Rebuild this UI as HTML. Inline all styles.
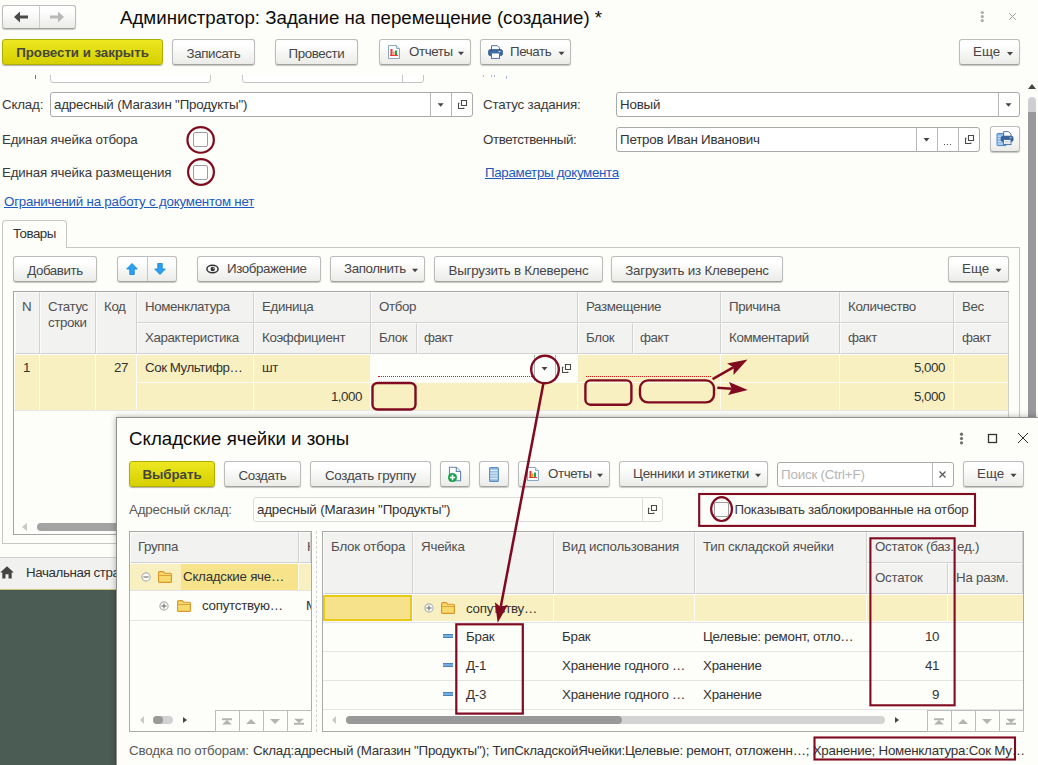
<!DOCTYPE html>
<html><head><meta charset="utf-8"><title>1C</title>
<style>
*{box-sizing:border-box;margin:0;padding:0}
html,body{width:1038px;height:765px;overflow:hidden;background:#fdfdf9}
body{font-family:"Liberation Sans",sans-serif;font-size:13.33px;letter-spacing:-0.18px;color:#3d3d3d;position:relative}
.a{position:absolute;white-space:nowrap}
.t{position:absolute;white-space:nowrap;line-height:16px;height:16px;color:#3a3a3a}
.btn{position:absolute;height:26px;border:1px solid #bcbcbc;border-bottom-color:#a2a2a2;border-radius:3px;background:linear-gradient(#ffffff 20%,#ebebe8);box-shadow:0 1px 1px rgba(0,0,0,.22);text-align:center;line-height:24px;white-space:nowrap;color:#464646;padding-top:2px;letter-spacing:-0.4px}
.ybtn{position:absolute;height:26px;border:1px solid #b3ac00;border-radius:3px;background:linear-gradient(#ece721,#d6d000);box-shadow:0 1px 1px rgba(0,0,0,.3);text-align:center;line-height:24px;font-weight:bold;color:#46463c;white-space:nowrap;letter-spacing:-0.06px;padding-top:1px}
.inp{position:absolute;height:25px;border:1px solid #a9a9a9;border-radius:3px;background:#fff;line-height:23px;padding-left:3px;white-space:nowrap;color:#333}
.sep{position:absolute;top:0;bottom:0;width:1px;background:#b8b8b8}
.caret{position:absolute;width:0;height:0;border-left:3.5px solid transparent;border-right:3.5px solid transparent;border-top:4px solid #444}
.link{position:absolute;color:#1c58bd;text-decoration:underline;white-space:nowrap;line-height:16px}
.chk{position:absolute;width:15px;height:15px;border:1px solid #9e9e9e;border-radius:2px;background:#fefefd}
.hl{position:absolute;height:1px;background:#e4e4e4}
.sel{position:absolute;background:#f9f0c1}
.hc{position:absolute;background:#f2f2f0;border-right:1px solid #d1d1d1;border-bottom:1px solid #d1d1d1;border-left:1px solid #fbfbfa;border-top:1px solid #fbfbfa;color:#505050;line-height:16px;padding-top:6px;white-space:nowrap;overflow:hidden;letter-spacing:-0.38px}
.dc{position:absolute;line-height:16px;white-space:nowrap;color:#333;letter-spacing:-0.45px}
.dd{letter-spacing:-0.25px}
svg{position:absolute;overflow:visible}
</style></head><body>
<!-- main window -->
<div class="btn" style="left:2px;top:5px;width:74px;height:24px"></div>
<div class="a" style="left:39px;top:6px;width:1px;height:22px;background:#cdcdcd"></div>
<svg style="left:14px;top:11px" width="14" height="12"><path d="M0 6L6 0.5V4.4H14V7.6H6V11.5Z" fill="#4a4a4a"/></svg>
<svg style="left:50px;top:11px" width="14" height="12"><path d="M14 6L8 0.5V4.6H0V7.4H8V11.5Z" fill="#b9b9b9"/></svg>
<div class="a" style="left:120px;top:6px;font-size:18.7px;line-height:24px;height:24px;color:#0c0c0c;letter-spacing:0">Администратор: Задание на перемещение (создание) *</div>
<svg style="left:980px;top:10px" width="5" height="13"><circle cx="2.3" cy="2.5" r="1.6" fill="#adadad"/><circle cx="2.3" cy="6.6" r="1.6" fill="#adadad"/><circle cx="2.3" cy="10.6" r="1.6" fill="#adadad"/></svg>
<svg style="left:1008px;top:12px" width="9" height="9"><path d="M1.1 1.1L7.9 7.9M7.9 1.1L1.1 7.9" stroke="#9c9c9c" stroke-width="1" fill="none"/></svg>
<div class="ybtn" style="left:2px;top:39px;width:161px;">Провести и закрыть</div>
<div class="btn" style="left:172px;top:39px;width:83px;">Записать</div>
<div class="btn" style="left:275px;top:39px;width:83px;">Провести</div>
<div class="btn" style="left:379px;top:39px;width:92px;"><span style="position:absolute;left:29px;top:0">Отчеты</span></div>
<svg style="left:388px;top:45px" width="13" height="14" viewBox="0 0 13 14"><path d="M0.5 0.5H8.5L11.5 3.5V13.5H0.5Z" fill="#fff" stroke="#8aa6c4" stroke-width="1"/><path d="M8.5 0.5V3.5H11.5" fill="#e6eef6" stroke="#8aa6c4" stroke-width="1"/><rect x="2.5" y="4" width="2" height="6" fill="#e8392c"/><rect x="5" y="6.5" width="1.5" height="3.5" fill="#f0a030"/><rect x="7" y="5.5" width="2" height="4.5" fill="#1fa04a"/><rect x="2" y="10" width="8" height="1" fill="#e8392c"/></svg>
<svg style="left:0;top:0" width="1" height="1"><path d="M458.0 51.75h6l-3.0 3.5z" fill="#444"/></svg>
<div class="btn" style="left:480px;top:39px;width:91px;"><span style="position:absolute;left:29px;top:0">Печать</span></div>
<svg style="left:488px;top:45px" width="15" height="14" viewBox="0 0 15 14"><path d="M3.5 5V0.7H9.3L11.5 2.9V5" fill="#fff" stroke="#4a74a8" stroke-width="1"/><rect x="0.6" y="4.6" width="13.8" height="6" rx="1.6" fill="#3c6aa3" stroke="#2d5688" stroke-width="0.8"/><rect x="3.5" y="8" width="8" height="5.4" fill="#fff" stroke="#4a74a8" stroke-width="1"/><rect x="10.5" y="6" width="2" height="1" fill="#cfe0f3"/></svg>
<svg style="left:0;top:0" width="1" height="1"><path d="M558.5 51.75h6l-3.0 3.5z" fill="#444"/></svg>
<div class="btn" style="left:959px;top:39px;width:61px;letter-spacing:0"><span style="position:absolute;left:13px;top:0">Еще</span></div>
<svg style="left:0;top:0" width="1" height="1"><path d="M1007.0 51.95h6l-3.0 3.5z" fill="#444"/></svg>
<div class="a" style="left:0;top:75px;width:1038px;height:10px;overflow:hidden">
<div class="a" style="left:50px;top:-17px;width:161px;height:25px;border:1px solid #c4c4c4;border-radius:3px;background:#fff"></div>
<div class="a" style="left:242px;top:-17px;width:182px;height:25px;border:1px solid #c4c4c4;border-radius:3px;background:#fff"></div>
<div class="a" style="left:402px;top:-2px;width:1px;height:9px;background:#c6c6c6"></div>
<div class="a" style="left:35px;top:0px;width:1px;height:4px;background:#777"></div>
<div class="a" style="left:483px;top:0px;width:1px;height:2px;background:#a9b9d9"></div>
<div class="a" style="left:491px;top:0px;width:1px;height:2px;background:#a9b9d9"></div>
<div class="a" style="left:494px;top:0px;width:1px;height:2px;background:#a9b9d9"></div>
<div class="a" style="left:506px;top:1px;width:1px;height:3px;background:#a9b9d9"></div>
</div>
<div class="t" style="left:2px;top:97px;">Склад:</div>
<div class="inp" style="left:50px;top:92px;width:423px;">адресный (Магазин "Продукты")<div class="sep" style="left:379px"></div><div class="sep" style="left:400px"></div></div>
<svg style="left:0;top:0" width="1" height="1"><path d="M437.7 103.25h6l-3.0 3.5z" fill="#444"/></svg>
<svg style="left:458px;top:100px" width="9" height="9" viewBox="0 0 9 9"><path d="M3.5 0.5h5v5h-5z" stroke="#4a4a4a" fill="none" stroke-width="1.1"/><path d="M1.5 3.2h-1v5.3h5.3v-1" stroke="#4a4a4a" fill="none" stroke-width="1.1"/></svg>
<div class="t" style="left:483px;top:97px;">Статус задания:</div>
<div class="inp" style="left:616px;top:92px;width:404px;">Новый<div class="sep" style="left:381px"></div></div>
<svg style="left:0;top:0" width="1" height="1"><path d="M1005.5 103.25h6l-3.0 3.5z" fill="#444"/></svg>
<div class="t" style="left:2px;top:132px;">Единая ячейка отбора</div>
<div class="chk" style="left:193px;top:132px;"></div>
<div class="t" style="left:483px;top:132px;letter-spacing:-0.4px">Ответственный:</div>
<div class="inp" style="left:616px;top:127px;width:364px;">Петров Иван Иванович<div class="sep" style="left:299px"></div><div class="sep" style="left:320px"></div><div class="sep" style="left:341px"></div></div>
<svg style="left:0;top:0" width="1" height="1"><path d="M923.5 137.95h6l-3.0 3.5z" fill="#444"/></svg>
<div class="a" style="left:944px;top:144px;width:1px;height:1px;background:#555"></div>
<div class="a" style="left:947px;top:144px;width:1px;height:1px;background:#555"></div>
<div class="a" style="left:950px;top:144px;width:1px;height:1px;background:#555"></div>
<svg style="left:965px;top:135px" width="9" height="9" viewBox="0 0 9 9"><path d="M3.5 0.5h5v5h-5z" stroke="#4a4a4a" fill="none" stroke-width="1.1"/><path d="M1.5 3.2h-1v5.3h5.3v-1" stroke="#4a4a4a" fill="none" stroke-width="1.1"/></svg>
<div class="btn" style="left:990px;top:126px;width:30px;"></div>
<svg style="left:996px;top:131px" width="18" height="16" viewBox="0 0 18 16"><rect x="1" y="2.4" width="9.4" height="12.2" rx="1" fill="#86b4e6" stroke="#4d86c6" stroke-width="1"/><path d="M1.6 5.2H10M1.6 7.9H10M1.6 10.6H10M1.6 13H10" stroke="#dbe9f7" stroke-width="0.9"/><path d="M7.7 5.6V0.6H12.6L15 3V5.6" fill="#fff" stroke="#41699c" stroke-width="0.9"/><rect x="5.2" y="5.2" width="11.8" height="5.2" rx="1.5" fill="#34629c" stroke="#274f82" stroke-width="0.8"/><rect x="7.4" y="8.6" width="7.6" height="5" fill="#fff" stroke="#41699c" stroke-width="0.9"/><path d="M8.6 10.4H13.8M8.6 12H13.8" stroke="#9db4d0" stroke-width="0.6"/><rect x="13.6" y="6.4" width="2" height="0.9" fill="#d6e4f5"/></svg>
<div class="t" style="left:2px;top:165px;">Единая ячейка размещения</div>
<div class="chk" style="left:193px;top:165px;"></div>
<div class="link" style="left:485px;top:165px;letter-spacing:-0.31px">Параметры документа</div>
<div class="link" style="left:4px;top:194px;letter-spacing:-0.22px">Ограничений на работу с документом нет</div>
<div class="a" style="left:2px;top:247px;width:1018px;height:297px;border:1px solid #c6c6c6;background:#fdfdf9"></div>
<div class="a" style="left:2px;top:220px;width:65px;height:28px;border:1px solid #c6c6c6;border-bottom:none;border-radius:4px 4px 0 0;background:#fdfdf9"></div>
<div class="t" style="left:13px;top:226px;color:#333;letter-spacing:-0.5px">Товары</div>
<div class="btn" style="left:13px;top:256px;width:84px;">Добавить</div>
<div class="btn" style="left:117px;top:256px;width:60px;"></div>
<div class="a" style="left:147px;top:257px;width:1px;height:24px;background:#c6c6c6"></div>
<svg style="left:126px;top:263px" width="12" height="12" viewBox="0 0 12 12"><path d="M6 0.5L11.3 6H8.2V11.5H3.8V6H0.7Z" fill="#2ba1f5" stroke="#1c86d8" stroke-width="0.9" stroke-linejoin="round"/></svg>
<svg style="left:154px;top:263px" width="12" height="12" viewBox="0 0 12 12"><path transform="rotate(180 6 6)" d="M6 0.5L11.3 6H8.2V11.5H3.8V6H0.7Z" fill="#2ba1f5" stroke="#1c86d8" stroke-width="0.9" stroke-linejoin="round"/></svg>
<div class="btn" style="left:197px;top:256px;width:124px;"><span style="position:absolute;left:29px;top:0">Изображение</span></div>
<svg style="left:206px;top:264px" width="13" height="10" viewBox="0 0 13 10"><ellipse cx="6.5" cy="5" rx="5.6" ry="3.7" fill="#fff" stroke="#333" stroke-width="1.5"/><circle cx="6.7" cy="5" r="2.2" fill="#333"/><circle cx="7.4" cy="4.3" r="0.7" fill="#bbb"/></svg>
<div class="btn" style="left:330px;top:256px;width:95px;"><span style="position:absolute;left:13px;top:0">Заполнить</span></div>
<svg style="left:0;top:0" width="1" height="1"><path d="M412.0 268.75h6l-3.0 3.5z" fill="#444"/></svg>
<div class="btn" style="left:434px;top:256px;width:169px;letter-spacing:-0.22px">Выгрузить в Клеверенс</div>
<div class="btn" style="left:611px;top:256px;width:172px;letter-spacing:-0.2px">Загрузить из Клеверенс</div>
<div class="btn" style="left:948px;top:256px;width:61px;letter-spacing:0"><span style="position:absolute;left:13px;top:0">Еще</span></div>
<svg style="left:0;top:0" width="1" height="1"><path d="M995.5 268.75h6l-3.0 3.5z" fill="#444"/></svg>
<div class="a" style="left:13px;top:291px;width:996px;height:244px;border:1px solid #a6a6a6;background:#fdfdf9"></div>
<div class="hc" style="left:15px;top:292px;width:25px;height:62px;padding-left:6px;">N</div>
<div class="hc" style="left:40px;top:292px;width:56px;height:62px;padding-left:7px;">Статус<br>строки</div>
<div class="hc" style="left:96px;top:292px;width:41px;height:62px;padding-left:7px;">Код</div>
<div class="hc" style="left:137px;top:292px;width:117px;height:31px;padding-left:7px;">Номенклатура</div>
<div class="hc" style="left:137px;top:323px;width:117px;height:31px;padding-left:7px;">Характеристика</div>
<div class="hc" style="left:254px;top:292px;width:117px;height:31px;padding-left:7px;">Единица</div>
<div class="hc" style="left:254px;top:323px;width:117px;height:31px;padding-left:7px;">Коэффициент</div>
<div class="hc" style="left:721px;top:292px;width:119px;height:31px;padding-left:7px;">Причина</div>
<div class="hc" style="left:721px;top:323px;width:119px;height:31px;padding-left:7px;">Комментарий</div>
<div class="hc" style="left:840px;top:292px;width:114px;height:31px;padding-left:7px;">Количество</div>
<div class="hc" style="left:840px;top:323px;width:114px;height:31px;padding-left:7px;">факт</div>
<div class="hc" style="left:954px;top:292px;width:55px;height:31px;padding-left:7px;">Вес</div>
<div class="hc" style="left:954px;top:323px;width:55px;height:31px;padding-left:7px;">факт</div>
<div class="hc" style="left:371px;top:292px;width:207px;height:31px;padding-left:7px;">Отбор</div>
<div class="hc" style="left:371px;top:323px;width:46px;height:31px;padding-left:7px;">Блок</div>
<div class="hc" style="left:417px;top:323px;width:161px;height:31px;padding-left:6px;">факт</div>
<div class="hc" style="left:578px;top:292px;width:143px;height:31px;padding-left:7px;">Размещение</div>
<div class="hc" style="left:578px;top:323px;width:55px;height:31px;padding-left:7px;">Блок</div>
<div class="hc" style="left:633px;top:323px;width:88px;height:31px;padding-left:6px;">факт</div>
<div class="sel" style="left:15px;top:355px;width:993px;height:55px;"></div>
<div class="a" style="left:39px;top:355px;width:1px;height:55px;background:#fefcf4"></div>
<div class="a" style="left:95px;top:355px;width:1px;height:55px;background:#fefcf4"></div>
<div class="a" style="left:136px;top:355px;width:1px;height:55px;background:#fefcf4"></div>
<div class="a" style="left:253px;top:355px;width:1px;height:55px;background:#fefcf4"></div>
<div class="a" style="left:370px;top:355px;width:1px;height:55px;background:#fefcf4"></div>
<div class="a" style="left:577px;top:355px;width:1px;height:55px;background:#fefcf4"></div>
<div class="a" style="left:720px;top:355px;width:1px;height:55px;background:#fefcf4"></div>
<div class="a" style="left:839px;top:355px;width:1px;height:55px;background:#fefcf4"></div>
<div class="a" style="left:953px;top:355px;width:1px;height:55px;background:#fefcf4"></div>
<div class="a" style="left:137px;top:382px;width:871px;height:1px;background:#fefcf4"></div>
<div class="a" style="left:14px;top:410px;width:994px;height:1px;background:#e6e6e6"></div>
<div class="a" style="left:1008px;top:292px;width:1px;height:242px;background:#cfcfcf"></div>
<div class="a" style="left:371px;top:354px;width:207px;height:28px;background:#fefefb"></div>
<div class="a" style="left:378px;top:376px;width:154px;height:0px;border-top:1px dotted #f01515"></div>
<div class="a" style="left:534px;top:355px;width:1px;height:26px;background:#b4b4b4"></div>
<div class="a" style="left:555px;top:355px;width:1px;height:26px;background:#b4b4b4"></div>
<svg style="left:0;top:0" width="1" height="1"><path d="M541.5 367.05h6l-3.0 3.5z" fill="#444"/></svg>
<svg style="left:562px;top:364px" width="9" height="9" viewBox="0 0 9 9"><path d="M3.5 0.5h5v5h-5z" stroke="#4a4a4a" fill="none" stroke-width="1.1"/><path d="M1.5 3.2h-1v5.3h5.3v-1" stroke="#4a4a4a" fill="none" stroke-width="1.1"/></svg>
<div class="a" style="left:586px;top:376px;width:125px;height:0px;border-top:1px dotted #f01515"></div>
<div class="dc" style="left:23px;top:360px;">1</div>
<div class="dc" style="left:95px;top:360px;width:33px;text-align:right">27</div>
<div class="dc" style="left:145px;top:360px;">Сок Мультифр…</div>
<div class="dc" style="left:262px;top:360px;">шт</div>
<div class="dc" style="left:253px;top:389px;width:109px;text-align:right">1,000</div>
<div class="dc" style="left:839px;top:360px;width:106px;text-align:right">5,000</div>
<div class="dc" style="left:839px;top:389px;width:106px;text-align:right">5,000</div>
<div class="a" style="left:37px;top:523px;width:200px;height:8px;border-radius:4px;background:#a3a3a3"></div>
<div class="a" style="left:22px;top:523px;width:0px;height:0px;border-top:4px solid transparent;border-bottom:4px solid transparent;border-right:5px solid #c8c8c8"></div>
<div class="a" style="left:0px;top:557px;width:1038px;height:1px;background:#cfcfcf"></div>
<div class="a" style="left:0px;top:558px;width:1038px;height:31px;background:#f1f1ef"></div>
<div class="a" style="left:0px;top:589px;width:1038px;height:1px;background:#c9c47a"></div>
<div class="a" style="left:0px;top:590px;width:1038px;height:175px;background:#4a5c54"></div>
<svg style="left:0px;top:566px" width="14" height="13"><path d="M7 0.3L0.2 6.5H2.3V12.5H5.5V8.3H8.5V12.5H11.7V6.5H13.8Z" fill="#444"/></svg>
<div class="t" style="left:26px;top:565px;color:#333;letter-spacing:-0.4px">Начальная страница</div>
<div class="a" style="left:1028px;top:97px;width:8px;height:330px;border-radius:4px 4px 0 0;background:#cfcfcf"></div>
<div class="a" style="left:1028px;top:112px;width:8px;height:315px;background:#999"></div>
<div class="a" style="left:1028px;top:84px;width:0px;height:0px;border-left:4px solid transparent;border-right:4px solid transparent;border-bottom:5px solid #444"></div>
<!-- dialog -->
<div class="a" style="left:116px;top:417px;width:924px;height:350px;background:#fdfdf9;border:1px solid #909090;box-shadow:0 0 6px rgba(0,0,0,.32)"></div>
<div class="a" style="left:129px;top:427px;font-size:18.7px;line-height:24px;height:24px;color:#0c0c0c;letter-spacing:0">Складские ячейки и зоны</div>
<svg style="left:959px;top:432px" width="5" height="13"><circle cx="2.5" cy="2.2" r="1.6" fill="#6e6e6e"/><circle cx="2.5" cy="6.5" r="1.6" fill="#6e6e6e"/><circle cx="2.5" cy="10.8" r="1.6" fill="#6e6e6e"/></svg>
<svg style="left:987px;top:433px" width="11" height="11"><rect x="1.5" y="1.5" width="8" height="8" fill="none" stroke="#333" stroke-width="1.3"/></svg>
<svg style="left:1017px;top:432px" width="12" height="12"><path d="M1 1L11 11M11 1L1 11" stroke="#2e2e2e" stroke-width="1" fill="none"/></svg>
<div class="ybtn" style="left:129px;top:461px;width:86px;">Выбрать</div>
<div class="btn" style="left:224px;top:461px;width:77px;">Создать</div>
<div class="btn" style="left:310px;top:461px;width:121px;letter-spacing:-0.22px">Создать группу</div>
<div class="btn" style="left:440px;top:461px;width:30px;"></div>
<svg style="left:447px;top:466px" width="14" height="16" viewBox="0 0 14 16"><path d="M2.5 1.2H9.3L13.6 5.5V14.8H2.5Z" fill="#fff" stroke="#6585ad" stroke-width="1.1"/><path d="M9.3 1.2V5.5H13.6" fill="#e6eef6" stroke="#6585ad" stroke-width="1.1"/><circle cx="5.5" cy="11.5" r="4.5" fill="#12a24a"/><path d="M5.5 8.8V14.2M2.8 11.5H8.2" stroke="#fff" stroke-width="1.6"/></svg>
<div class="btn" style="left:479px;top:461px;width:30px;"></div>
<svg style="left:489px;top:467px" width="11" height="15" viewBox="0 0 11 15"><rect x="0.6" y="0.6" width="8.8" height="13.8" rx="1" fill="#9dc0e4" stroke="#5a8cc4" stroke-width="1.1"/><path d="M1.3 3.4H8.7M1.3 6.1H8.7M1.3 8.9H8.7M1.3 11.6H8.7" stroke="#e4eef9" stroke-width="1"/></svg>
<div class="btn" style="left:518px;top:461px;width:92px;"><span style="position:absolute;left:29px;top:0">Отчеты</span></div>
<svg style="left:527px;top:467px" width="13" height="14" viewBox="0 0 13 14"><path d="M0.5 0.5H8.5L11.5 3.5V13.5H0.5Z" fill="#fff" stroke="#8aa6c4" stroke-width="1"/><path d="M8.5 0.5V3.5H11.5" fill="#e6eef6" stroke="#8aa6c4" stroke-width="1"/><rect x="2.5" y="4" width="2" height="6" fill="#e8392c"/><rect x="5" y="6.5" width="1.5" height="3.5" fill="#f0a030"/><rect x="7" y="5.5" width="2" height="4.5" fill="#1fa04a"/><rect x="2" y="10" width="8" height="1" fill="#e8392c"/></svg>
<svg style="left:0;top:0" width="1" height="1"><path d="M597.0 473.75h6l-3.0 3.5z" fill="#444"/></svg>
<div class="btn" style="left:619px;top:461px;width:149px;letter-spacing:-0.22px"><span style="position:absolute;left:13px;top:0">Ценники и этикетки</span></div>
<svg style="left:0;top:0" width="1" height="1"><path d="M755.0 473.75h6l-3.0 3.5z" fill="#444"/></svg>
<div class="inp" style="left:777px;top:462px;width:177px;color:#b4b4b4">Поиск (Ctrl+F)<div class="sep" style="left:154px"></div></div>
<svg style="left:939px;top:471px" width="7" height="7"><path d="M0.5 0.5L6.5 6.5M6.5 0.5L0.5 6.5" stroke="#555" stroke-width="1.2"/></svg>
<div class="btn" style="left:963px;top:461px;width:61px;letter-spacing:0"><span style="position:absolute;left:13px;top:0">Еще</span></div>
<svg style="left:0;top:0" width="1" height="1"><path d="M1010.5 473.75h6l-3.0 3.5z" fill="#444"/></svg>
<div class="t" style="left:129px;top:502px;color:#5a5a5a">Адресный склад:</div>
<div class="inp" style="left:253px;top:497px;width:410px;border-color:#dcdcdc;background:#fdfdf9">адресный (Магазин "Продукты")<div class="sep" style="left:388px;background:#dcdcdc"></div></div>
<svg style="left:648px;top:505px" width="9" height="9" viewBox="0 0 9 9"><path d="M3.5 0.5h5v5h-5z" stroke="#4a4a4a" fill="none" stroke-width="1.1"/><path d="M1.5 3.2h-1v5.3h5.3v-1" stroke="#4a4a4a" fill="none" stroke-width="1.1"/></svg>
<div class="chk" style="left:714px;top:502px;"></div>
<div class="t" style="left:734.5px;top:502px;letter-spacing:-0.31px">Показывать заблокированные на отбор</div>
<div class="a" style="left:129px;top:531px;width:183px;height:201px;border:1px solid #a9a9a9;background:#fdfdf9"></div>
<div class="hc" style="left:130px;top:532px;width:169px;height:31px;padding-left:7px;">Группа</div>
<div class="hc" style="left:299px;top:532px;width:12px;height:31px;padding-left:7px;">Н</div>
<div class="sel" style="left:130px;top:564px;width:181px;height:26px;"></div>
<div class="a" style="left:181px;top:564px;width:117px;height:26px;background:#f6e38a"></div>
<div class="a" style="left:298px;top:564px;width:1px;height:26px;background:#fefcf4"></div>
<div class="hl" style="left:130px;top:590px;width:181px;"></div>
<div class="hl" style="left:130px;top:620px;width:181px;"></div>
<div class="dc dd" style="left:183px;top:569px;">Складские яче…</div>
<div class="dc dd" style="left:202px;top:598px;">сопутствую…</div>
<div class="a" style="left:306px;top:598px;width:5px;overflow:hidden;line-height:16px;color:#333">М</div>
<svg style="left:140.6px;top:571.5px" width="10" height="10" viewBox="0 0 10 10"><circle cx="5" cy="5" r="4.1" fill="#fefefc" stroke="#b4b4b4" stroke-width="1.2"/><path d="M2.4 5H7.6" stroke="#777" stroke-width="1.2"/></svg>
<svg style="left:158px;top:571px" width="14" height="12" viewBox="0 0 14 12"><path d="M0.6 1.8Q0.6 0.6 1.8 0.6H5L6.8 2.2H12.2Q13.4 2.2 13.4 3.4V10.4Q13.4 11.4 12.4 11.4H1.6Q0.6 11.4 0.6 10.4Z" fill="#f8da6c" stroke="#d9962a" stroke-width="1.15"/><path d="M1.2 4.5H12.8" stroke="#dba238" stroke-width="1"/></svg>
<svg style="left:159.4px;top:600.5px" width="10" height="10" viewBox="0 0 10 10"><circle cx="5" cy="5" r="4.1" fill="#fefefc" stroke="#b4b4b4" stroke-width="1.2"/><path d="M2.4 5H7.6" stroke="#777" stroke-width="1.2"/><path d="M5 2.4V7.6" stroke="#777" stroke-width="1.2"/></svg>
<svg style="left:177px;top:600px" width="14" height="12" viewBox="0 0 14 12"><path d="M0.6 1.8Q0.6 0.6 1.8 0.6H5L6.8 2.2H12.2Q13.4 2.2 13.4 3.4V10.4Q13.4 11.4 12.4 11.4H1.6Q0.6 11.4 0.6 10.4Z" fill="#f8da6c" stroke="#d9962a" stroke-width="1.15"/><path d="M1.2 4.5H12.8" stroke="#dba238" stroke-width="1"/></svg>
<div class="a" style="left:140px;top:716px;width:0px;height:0px;border-top:4px solid transparent;border-bottom:4px solid transparent;border-right:4px solid #c8c8c8"></div>
<div class="a" style="left:153px;top:716px;width:20px;height:8px;border-radius:4px;background:#d2d2d2"></div>
<div class="a" style="left:153px;top:716px;width:10px;height:8px;border-radius:4px;background:#999"></div>
<div class="a" style="left:183px;top:716.5px;width:0px;height:0px;border-top:3.5px solid transparent;border-bottom:3.5px solid transparent;border-left:4px solid #444"></div>
<div class="a" style="left:215px;top:710px;width:25px;height:22px;border:1px solid #bcbcbc;background:#fdfdf9"></div>
<div class="a" style="left:239px;top:710px;width:25px;height:22px;border:1px solid #bcbcbc;background:#fdfdf9"></div>
<div class="a" style="left:263px;top:710px;width:25px;height:22px;border:1px solid #bcbcbc;background:#fdfdf9"></div>
<div class="a" style="left:287px;top:710px;width:25px;height:22px;border:1px solid #bcbcbc;background:#fdfdf9"></div>
<svg style="left:0;top:0" width="1" height="1"><path d="M222 718.3h10v2h-10zM227 720.1l5 4.3h-10z" fill="#b3b3b3"/><path d="M251 719l5 5h-10z" fill="#b3b3b3"/><path d="M275 724l5 -5h-10z" fill="#b3b3b3"/><path d="M294 722.8h10v2h-10zM299 723l5 -4.3h-10z" fill="#b3b3b3"/></svg>
<div class="a" style="left:316px;top:531px;width:0px;height:201px;border-left:1px dashed #d2d2d2"></div>
<div class="a" style="left:322px;top:531px;width:702px;height:201px;border:1px solid #a9a9a9;background:#fdfdf9"></div>
<div class="hc" style="left:323px;top:532px;width:90px;height:62px;padding-left:7px;letter-spacing:-0.22px">Блок отбора</div>
<div class="hc" style="left:413px;top:532px;width:141px;height:62px;padding-left:7px;letter-spacing:-0.22px">Ячейка</div>
<div class="hc" style="left:554px;top:532px;width:141px;height:62px;padding-left:7px;letter-spacing:-0.22px">Вид использования</div>
<div class="hc" style="left:695px;top:532px;width:172px;height:62px;padding-left:7px;letter-spacing:-0.22px">Тип складской ячейки</div>
<div class="hc" style="left:867px;top:532px;width:156px;height:31px;padding-left:7px;letter-spacing:-0.25px">Остаток (баз. ед.)</div>
<div class="hc" style="left:867px;top:563px;width:81px;height:31px;padding-left:7px;letter-spacing:-0.25px">Остаток</div>
<div class="hc" style="left:948px;top:563px;width:75px;height:31px;padding-left:7px;letter-spacing:-0.25px">На разм.</div>
<div class="sel" style="left:323px;top:595px;width:700px;height:26px;"></div>
<div class="a" style="left:412px;top:595px;width:1px;height:26px;background:#fefcf4"></div>
<div class="a" style="left:553px;top:595px;width:1px;height:26px;background:#fefcf4"></div>
<div class="a" style="left:694px;top:595px;width:1px;height:26px;background:#fefcf4"></div>
<div class="a" style="left:866px;top:595px;width:1px;height:26px;background:#fefcf4"></div>
<div class="a" style="left:947px;top:595px;width:1px;height:26px;background:#fefcf4"></div>
<div class="a" style="left:323px;top:595px;width:89px;height:26px;background:#f5e28a;border:2px solid #e9c914"></div>
<div class="hl" style="left:323px;top:622px;width:700px;"></div>
<div class="hl" style="left:323px;top:651px;width:700px;"></div>
<div class="hl" style="left:323px;top:680px;width:700px;"></div>
<div class="hl" style="left:323px;top:709px;width:700px;"></div>
<svg style="left:423.8px;top:603px" width="10" height="10" viewBox="0 0 10 10"><circle cx="5" cy="5" r="4.1" fill="#fefefc" stroke="#b4b4b4" stroke-width="1.2"/><path d="M2.4 5H7.6" stroke="#777" stroke-width="1.2"/><path d="M5 2.4V7.6" stroke="#777" stroke-width="1.2"/></svg>
<svg style="left:441px;top:602px" width="14" height="12" viewBox="0 0 14 12"><path d="M0.6 1.8Q0.6 0.6 1.8 0.6H5L6.8 2.2H12.2Q13.4 2.2 13.4 3.4V10.4Q13.4 11.4 12.4 11.4H1.6Q0.6 11.4 0.6 10.4Z" fill="#f8da6c" stroke="#d9962a" stroke-width="1.15"/><path d="M1.2 4.5H12.8" stroke="#dba238" stroke-width="1"/></svg>
<div class="dc dd" style="left:466px;top:601px;">сопутству…</div>
<div class="a" style="left:443px;top:634px;width:10px;height:4px;background:#74acdd;border:1px solid #4a82b8;border-left:none;border-right:none"></div>
<div class="dc dd" style="left:466px;top:629px;">Брак</div>
<div class="dc dd" style="left:562px;top:629px;">Брак</div>
<div class="dc dd" style="left:703px;top:629px;">Целевые: ремонт, отло…</div>
<div class="dc" style="left:866px;top:629px;width:73px;text-align:right">10</div>
<div class="a" style="left:443px;top:663px;width:10px;height:4px;background:#74acdd;border:1px solid #4a82b8;border-left:none;border-right:none"></div>
<div class="dc dd" style="left:466px;top:658px;">Д-1</div>
<div class="dc dd" style="left:562px;top:658px;">Хранение годного …</div>
<div class="dc dd" style="left:703px;top:658px;">Хранение</div>
<div class="dc" style="left:866px;top:658px;width:73px;text-align:right">41</div>
<div class="a" style="left:443px;top:692px;width:10px;height:4px;background:#74acdd;border:1px solid #4a82b8;border-left:none;border-right:none"></div>
<div class="dc dd" style="left:466px;top:687px;">Д-3</div>
<div class="dc dd" style="left:562px;top:687px;">Хранение годного …</div>
<div class="dc dd" style="left:703px;top:687px;">Хранение</div>
<div class="dc" style="left:866px;top:687px;width:73px;text-align:right">9</div>
<div class="a" style="left:332px;top:716px;width:0px;height:0px;border-top:4px solid transparent;border-bottom:4px solid transparent;border-right:4px solid #c8c8c8"></div>
<div class="a" style="left:346px;top:716px;width:539px;height:8px;border-radius:4px;background:#d4d4d4"></div>
<div class="a" style="left:346px;top:716px;width:276px;height:8px;border-radius:4px;background:#999"></div>
<div class="a" style="left:895px;top:716.5px;width:0px;height:0px;border-top:3.5px solid transparent;border-bottom:3.5px solid transparent;border-left:4px solid #444"></div>
<div class="a" style="left:927px;top:710px;width:25px;height:22px;border:1px solid #bcbcbc;background:#fdfdf9"></div>
<div class="a" style="left:951px;top:710px;width:25px;height:22px;border:1px solid #bcbcbc;background:#fdfdf9"></div>
<div class="a" style="left:975px;top:710px;width:25px;height:22px;border:1px solid #bcbcbc;background:#fdfdf9"></div>
<div class="a" style="left:999px;top:710px;width:25px;height:22px;border:1px solid #bcbcbc;background:#fdfdf9"></div>
<svg style="left:0;top:0" width="1" height="1"><path d="M934 718.3h10v2h-10zM939 720.1l5 4.3h-10z" fill="#b3b3b3"/><path d="M963 719l5 5h-10z" fill="#b3b3b3"/><path d="M987 724l5 -5h-10z" fill="#b3b3b3"/><path d="M1006 722.8h10v2h-10zM1011 723l5 -4.3h-10z" fill="#b3b3b3"/></svg>
<div class="t" style="left:129px;top:743px;color:#5a5a5a">Сводка по отборам:</div>
<div class="t" style="left:253px;top:743px;color:#333;letter-spacing:-0.23px">Склад:адресный (Магазин "Продукты"); ТипСкладскойЯчейки:Целевые: ремонт, отложенн…; Хранение; Номенклатура:Сок Му…</div>
<svg id="ann" style="left:0;top:0" width="1038" height="765" viewBox="0 0 1038 765"><g stroke="#800a20" stroke-width="2.4" fill="none"><ellipse cx="200.65" cy="139.9" rx="13.2" ry="12.85" stroke-width="2.2"/><circle cx="201" cy="172" r="12.9" stroke-width="2.2"/><circle cx="545" cy="369.5" r="13.8"/><ellipse cx="721.55" cy="509.1" rx="10.4" ry="11.9" stroke-width="2.2"/><rect x="372.5" y="383" width="43" height="26.5" rx="5"/><rect x="585.4" y="380.4" width="46" height="24.3" rx="5"/><rect x="640" y="380.4" width="74" height="22" rx="8"/><rect x="699.2" y="494" width="275.8" height="31.9" stroke-width="2.1"/><rect x="456.3" y="624.3" width="66.5" height="89.3" stroke-width="2.2"/><rect x="870.4" y="538.3" width="84.2" height="167" stroke-width="2.1"/><rect x="814.5" y="737.5" width="200.5" height="22" stroke-width="2.1"/></g><path d="M543.3 384.0L500.7 607.0" stroke="#800a20" stroke-width="2.5" fill="none"/><path d="M497.7 622.8L494.9 602.3L500.7 607.0L507.9 604.8Z" fill="#800a20"/><path d="M712.6 379.1L733.7 367.2" stroke="#800a20" stroke-width="2.5" fill="none"/><path d="M747.5 359.4L733.5 374.9L733.7 367.2L727.0 363.4Z" fill="#800a20"/><path d="M717.3 387.8L731.8 388.8" stroke="#800a20" stroke-width="2.5" fill="none"/><path d="M747.8 389.9L728.1 395.1L731.8 388.8L729.0 382.1Z" fill="#800a20"/></svg>
</body></html>
